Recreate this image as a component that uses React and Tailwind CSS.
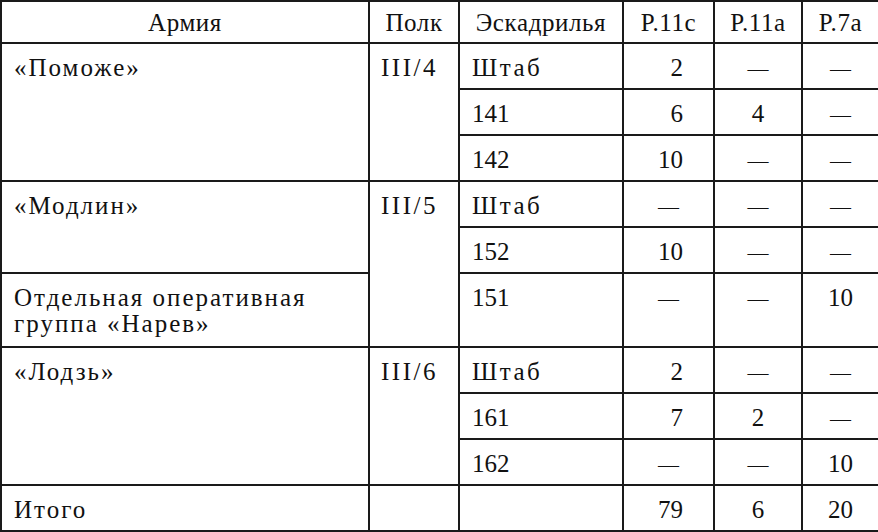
import React from 'react'

const rows = [
  { army: '«Поможе»', armySpan: 3, polk: 'III/4', polkSpan: 3, sq: 'Штаб', a: '2', b: '—', c: '—' },
  { sq: '141', a: '6', b: '4', c: '—' },
  { sq: '142', a: '10', b: '—', c: '—' },
  { army: '«Модлин»', armySpan: 2, polk: 'III/5', polkSpan: 3, sq: 'Штаб', a: '—', b: '—', c: '—' },
  { sq: '152', a: '10', b: '—', c: '—' },
  { army: 'Отдельная оперативная группа «Нарев»', armySpan: 1, sq: '151', a: '—', b: '—', c: '10', tall: true },
  { army: '«Лодзь»', armySpan: 3, polk: 'III/6', polkSpan: 3, sq: 'Штаб', a: '2', b: '—', c: '—' },
  { sq: '161', a: '7', b: '2', c: '—' },
  { sq: '162', a: '—', b: '—', c: '10' },
  { army: 'Итого', armySpan: 1, polk: '', polkSpan: 1, sq: '', a: '79', b: '6', c: '20' }
]

const cell = 'border-2 border-[#1a1a1a] align-top pt-[11px] pb-[7px] leading-[26px]'
const head = 'border-2 border-[#1a1a1a] text-center font-normal pt-[8px] pb-[6px] leading-[26px] tracking-[0.6px]'

const Dash = () => <span className="text-[21px] leading-none">—</span>

// P.11c numbers sit flush right, dashes stay centred
function NumCell ({ v, right }) {
  if (v === '—') return <td className={`${cell} text-center`}><Dash /></td>
  if (right) return <td className={`${cell} text-right pr-[30px]`}>{v}</td>
  return <td className={`${cell} text-center`}>{v}</td>
}

export default function App () {
  return (
    <div className="w-[878px] h-[532px] bg-white text-[#111] overflow-hidden" style={{ fontFamily: '"Liberation Serif", "Times New Roman", serif' }}>
      <table className="w-[878px] table-fixed border-collapse text-[25px]">
        <colgroup>
          <col className="w-[368px]" />
          <col className="w-[90px]" />
          <col className="w-[164px]" />
          <col className="w-[91px]" />
          <col className="w-[88px]" />
          <col className="w-[77px]" />
        </colgroup>
        <thead>
          <tr>
            <th className={head}>Армия</th>
            <th className={head}>Полк</th>
            <th className={head}>Эскадрилья</th>
            <th className={head}>P.11c</th>
            <th className={head}>P.11a</th>
            <th className={head}>P.7a</th>
          </tr>
        </thead>
        <tbody>
          {rows.map((r, i) => (
            <tr key={i}>
              {r.army !== undefined && (
                <td rowSpan={r.armySpan} className={`${cell} pl-[12px] tracking-[2px] ${r.tall ? 'pb-[9px]' : ''}`}>
                  {r.tall ? <>Отдельная оперативная<br />группа «Нарев»</> : r.army}
                </td>
              )}
              {r.polk !== undefined && (
                <td rowSpan={r.polkSpan} className={`${cell} pl-[11px] tracking-[2.5px]`}>{r.polk}</td>
              )}
              <td className={`${cell} pl-[12px] ${r.sq === 'Штаб' ? 'tracking-[2.5px]' : ''}`}>{r.sq}</td>
              <NumCell v={r.a} right />
              <NumCell v={r.b} />
              <NumCell v={r.c} />
            </tr>
          ))}
        </tbody>
      </table>
    </div>
  )
}
